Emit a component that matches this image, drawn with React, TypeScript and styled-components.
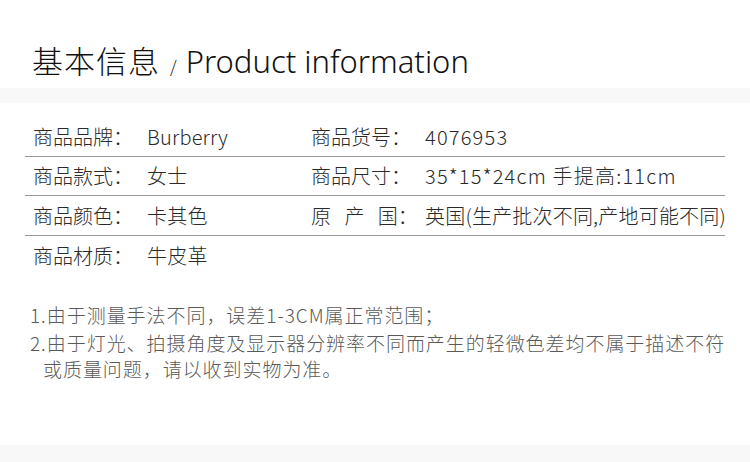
import styled, { createGlobalStyle } from 'styled-components';

const GlobalStyle = createGlobalStyle`
    html, body {
        margin: 0;
        padding: 0;
        background: #ffffff;
    }
    body {
        font-family: "Noto Sans CJK SC", "Noto Sans", sans-serif;
        color: #222;
    }
`;

type Field = { label: string; value: string; spread?: boolean; numeric?: boolean };

const rows: Field[][] = [
    [
        { label: '商品品牌：', value: 'Burberry' },
        { label: '商品货号：', value: '4076953', numeric: true },
    ],
    [
        { label: '商品款式：', value: '女士' },
        { label: '商品尺寸：', value: '35*15*24cm 手提高:11cm', numeric: true },
    ],
    [
        { label: '商品颜色：', value: '卡其色' },
        { label: '原 产 国：', value: '英国(生产批次不同,产地可能不同)', spread: true },
    ],
    [{ label: '商品材质：', value: '牛皮革' }],
];

const notes = [
    '1.由于测量手法不同，误差1-3CM属正常范围；',
    '2.由于灯光、拍摄角度及显示器分辨率不同而产生的轻微色差均不属于描述不符或质量问题，请以收到实物为准。',
];

export default function App() {
    return (
        <Page>
            <GlobalStyle />
            <Header>
                <TitleCn>基本信息</TitleCn>
                <Slash>/</Slash>
                <TitleEn>Product information</TitleEn>
            </Header>
            <Band />
            <Table>
                {rows.map((row, i) => (
                    <TableRow key={i} $last={i === rows.length - 1}>
                        {row.map((f) => (
                            <Cell key={f.label}>
                                <Label $spread={f.spread}>{f.label}</Label>
                                <Value $numeric={f.numeric}>{f.value}</Value>
                            </Cell>
                        ))}
                    </TableRow>
                ))}
            </Table>
            <Notes>
                {notes.map((n) => (
                    <Note key={n}>{n}</Note>
                ))}
            </Notes>
            <Band $bottom />
        </Page>
    );
}

const Page = styled.div`
    width: 750px;
    height: 462px;
    display: flex;
    flex-direction: column;
    overflow: hidden;
`;

const Header = styled.div`
    height: 88px;
    display: flex;
    align-items: baseline;
    padding: 0 32px;
    box-sizing: border-box;
    padding-top: 37px;
    color: #111;
`;

const TitleCn = styled.span`
    font-size: 31px;
    font-weight: 300;
    letter-spacing: 1px;
`;

const Slash = styled.span`
    font-size: 17px;
    margin: 0 9px 0 10px;
    font-weight: 300;
`;

const TitleEn = styled.span`
    font-family: "Noto Sans", sans-serif;
    font-size: 31px;
    font-weight: 300;
`;

const Band = styled.div<{ $bottom?: boolean }>`
    height: ${(p) => (p.$bottom ? 17 : 15)}px;
    background: #f8f8f8;
    margin-top: ${(p) => (p.$bottom ? 'auto' : 0)};
    flex-shrink: 0;
`;

const Table = styled.div`
    margin: 14px 25px 0;
    display: flex;
    flex-direction: column;
`;

const TableRow = styled.div<{ $last?: boolean }>`
    height: 39.5px;
    display: grid;
    grid-template-columns: 278px 1fr;
    align-items: center;
    padding-left: 8px;
    border-bottom: ${(p) => (p.$last ? 'none' : '1px solid #9a9a9a')};
    box-sizing: border-box;
`;

const Cell = styled.div`
    display: flex;
    align-items: center;
    font-size: 20px;
    font-weight: 300;
    color: #2a2a2a;
    white-space: nowrap;
`;

const Label = styled.span<{ $spread?: boolean }>`
    width: 114px;
    flex-shrink: 0;
    word-spacing: ${(p) => (p.$spread ? '9px' : 'normal')};
`;

const Value = styled.span<{ $numeric?: boolean }>`
    letter-spacing: ${(p) => (p.$numeric ? '1.2px' : '0.2px')};
`;

const Notes = styled.div`
    margin: 27px 18px 0 30px;
    display: flex;
    flex-direction: column;
    gap: 2px;
`;

const Note = styled.p`
    margin: 0;
    font-size: 19px;
    font-weight: 300;
    line-height: 26px;
    color: #5a5a5a;
    padding-left: 13px;
    text-indent: -13px;
    letter-spacing: 0.95px;
`;
